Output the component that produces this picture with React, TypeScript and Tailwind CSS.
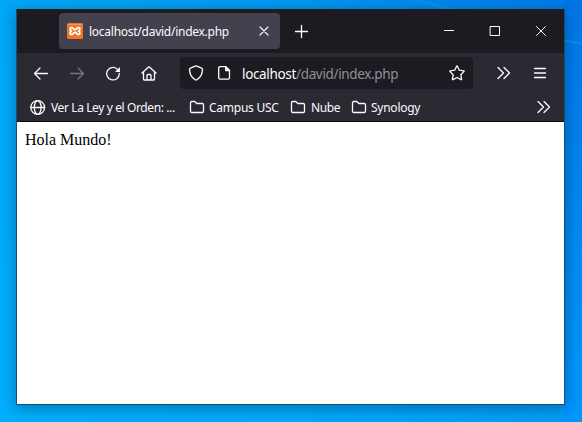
import type { ReactNode } from 'react';

function Icon({ w = 16, h = 16, className = '', children, sw = 1.3 }: { w?: number; h?: number; className?: string; children: ReactNode; sw?: number }) {
  return (
    <svg width={w} height={h} viewBox={`0 0 ${w} ${h}`} fill="none" stroke="currentColor" strokeWidth={sw} strokeLinecap="round" strokeLinejoin="round" className={`shrink-0 ${className}`}>
      {children}
    </svg>
  );
}

function Folder({ className = '' }: { className?: string }) {
  return (
    <Icon className={className}>
      <path d="M1.500 3.700c0-.7.500-1.200 1.200-1.200h3.100l2 2h5.500c.7 0 1.200.5 1.200 1.200v6.600c0 .7-.5 1.200-1.200 1.200H2.700c-.7 0-1.200-.5-1.200-1.200z" />
    </Icon>
  );
}

function Chevrons({ className = '' }: { className?: string }) {
  return (
    <Icon className={className}>
      <path d="M2 2.500 7.500 8 2 13.500M8 2.500 13.500 8 8 13.500" />
    </Icon>
  );
}

function TitleBar() {
  return (
    <div className="flex h-11 bg-[#1c1b22] pl-[42px]">
      <div className="mt-1 flex h-9 w-[221px] items-center rounded bg-[#42414d] pl-2">
        <svg width="16" height="16" viewBox="0 0 16 16" className="shrink-0">
          <rect width="16" height="16" rx="1.500" fill="#ef7623" />
          <path d="M1 1.500h14" stroke="#f39a5b" />
          <path d="M5.200 4.700C3 4 2.200 6.500 4.400 8 2.200 9.500 3 12 5.200 11.300 6.500 11 6.500 9.300 8 9.300s1.500 1.700 2.800 2c2.200.7 3-1.800.8-3.300 2.200-1.500 1.400-4-.8-3.300C9.500 5 9.500 6.700 8 6.700S6.500 5 5.200 4.700z" fill="none" stroke="#fff" strokeWidth="1.800" strokeLinejoin="round" />
        </svg>
        <span className="ml-1.5 w-[165px] translate-y-px whitespace-nowrap text-[12px] leading-4 tracking-[-0.26px]">localhost/david/index.php</span>
        <Icon sw={1.100} className="ml-[2px]"><path d="m4 4 8 8m0-8-8 8" /></Icon>
      </div>
      <Icon sw={1.300} className="ml-[14px] mt-[14px]"><path d="M7.500 2.500v12M1.500 8.500h12" /></Icon>
      <div className="ml-auto flex pt-[14px]">
        <Icon w={46} sw={1}><path d="M18 7.500h10" strokeLinecap="butt" /></Icon>
        <Icon w={46} sw={1}><path d="M18.500 3.500h9v9h-9z" strokeLinejoin="miter" /></Icon>
        <Icon w={46} sw={1}><path d="m18.500 3.500 9 9m0-9-9 9" /></Icon>
      </div>
    </div>
  );
}

function NavigationBar() {
  return (
    <div className="flex h-10 items-center bg-[#2b2a33] pl-4">
      <Icon><path d="M14.500 8.500h-13M7 3 1.500 8.500 7 14" /></Icon>
      <Icon className="ml-5 text-[#77767c]"><path d="M1.500 8.500h13M9 3l5.500 5.500L9 14" /></Icon>
      <Icon className="ml-5">
        <path d="M13 4.800A6.300 6.300 0 1 0 14.300 8.500" />
        <path d="M15 2v5H10z" fill="currentColor" stroke="none" />
      </Icon>
      <Icon className="ml-5">
        <path d="M1 8 7.600 1.900h.8L15 8M2.500 7v7.200c0 .5.300.8.800.8h9.400c.5 0 .8-.3.800-.8V7M6 15v-4.500c0-.6.400-1 1-1h2c.6 0 1 .4 1 1V15" />
      </Icon>
      <div className="ml-[23px] flex h-8 w-[293px] items-center rounded bg-[#1c1b22] pl-2">
        <Icon><path d="M7.300 1.100Q8 .8 8.700 1.100l4.900 2c.6.200.9.600.9 1.200 0 4.700-1.800 8-5.500 10.300-.7.400-1.300.4-2 0C3.300 12.300 1.500 9 1.500 4.300c0-.6.300-1 .9-1.200z" /></Icon>
        <Icon className="ml-3">
          <path d="M4 1.700h5.700l3.800 3.800v7.300c0 .8-.5 1.300-1.300 1.300H4c-.8 0-1.300-.5-1.300-1.300V3c0-.8.500-1.300 1.300-1.300z" />
          <path d="M9.700 1.700v3.800h3.800z" fill="currentColor" />
        </Icon>
        <span className="ml-[10px] w-[200px] translate-y-px whitespace-nowrap text-[13.500px] leading-5 tracking-[-0.34px] text-[#8f8f94]"><span className="text-[#fbfbfe]">localhost</span>/david/index.php</span>
        <Icon className="ml-[7px]"><path d="M7.600 1.200q.4-.7.800 0l1.900 4 4.400.6q.8.200.3.800l-3.200 3.100.8 4.400q0 .8-.7.500L8 12.500l-3.900 2.100q-.7.300-.7-.5l.8-4.400L1 6.600q-.5-.6.300-.8l4.400-.6z" /></Icon>
      </div>
      <Chevrons className="ml-[23px]" />
      <Icon className="ml-5" sw={1.300}><path d="M2.500 3.500h11M2.500 8h11M2.500 12.500h11" /></Icon>
    </div>
  );
}

function BookmarksBar() {
  return (
    <div className="flex h-7 items-center whitespace-nowrap bg-[#2b2a33] pl-[13px] pr-3 text-[12px] leading-4 tracking-[-0.25px]">
      <Icon sw={1.300}>
        <circle cx="7.700" cy="8.500" r="6.900" />
        <ellipse cx="7.700" cy="8.500" rx="3.400" ry="6.900" />
        <path d="M1 8.500h13.500" />
      </Icon>
      <span className="ml-[5px] w-[125px] translate-y-px tracking-[-0.39px]">Ver La Ley y el Orden: ...</span>
      <Folder className="ml-[13px]" />
      <span className="ml-1 w-[69px] translate-y-px">Campus USC</span>
      <Folder className="ml-3" />
      <span className="ml-[5px] w-[28px] translate-y-px tracking-[-0.4px]">Nube</span>
      <Folder className="ml-3" />
      <span className="ml-1 translate-y-px">Synology</span>
      <Chevrons className="ml-auto" />
    </div>
  );
}

export default function App() {
  return (
    <div className="relative h-[422px] w-[582px] overflow-hidden px-4 pt-[9px]">
      <svg width="582" height="422" className="absolute left-0 top-0">
        <defs>
          <linearGradient id="sky" x1="0" y1="0" x2="1" y2="0">
            <stop offset="0" stopColor="#00a8f8" />
            <stop offset=".5" stopColor="#0099f2" />
            <stop offset="1" stopColor="#0078e8" />
          </linearGradient>
          <linearGradient id="glow" x1="0" y1="0" x2="0" y2="1">
            <stop offset="0" stopColor="#00b4ff" stopOpacity="0" />
            <stop offset="1" stopColor="#00b4ff" stopOpacity=".6" />
          </linearGradient>
          <linearGradient id="beam" x1="0" y1="0" x2="0" y2="1">
            <stop offset="0" stopColor="#0076e5" />
            <stop offset="1" stopColor="#0097ff" />
          </linearGradient>
        </defs>
        <rect width="582" height="422" fill="url(#sky)" />
        <rect width="582" height="422" fill="url(#glow)" />
        <path d="M564 0h18v422h-18z" fill="url(#beam)" />
        <path d="m415 0 40 10M564 40l18 4" stroke="#1599f5" strokeWidth="2" opacity=".6" />
      </svg>
      <div className="relative flex h-[396px] w-[549px] flex-col border-x border-b border-[#17506c] bg-white font-['Noto_Sans','Open_Sans',sans-serif] text-[#fbfbfe] shadow-[0_3px_14px_rgba(0,35,60,0.4)]">
        <TitleBar />
        <NavigationBar />
        <BookmarksBar />
        <div className="h-px shrink-0 bg-[#0c0c0d]" />
        <main className="flex-1 p-2 font-['Liberation_Serif',serif] text-[16px] leading-[19px] text-black">Hola Mundo!</main>
      </div>
    </div>
  );
}
